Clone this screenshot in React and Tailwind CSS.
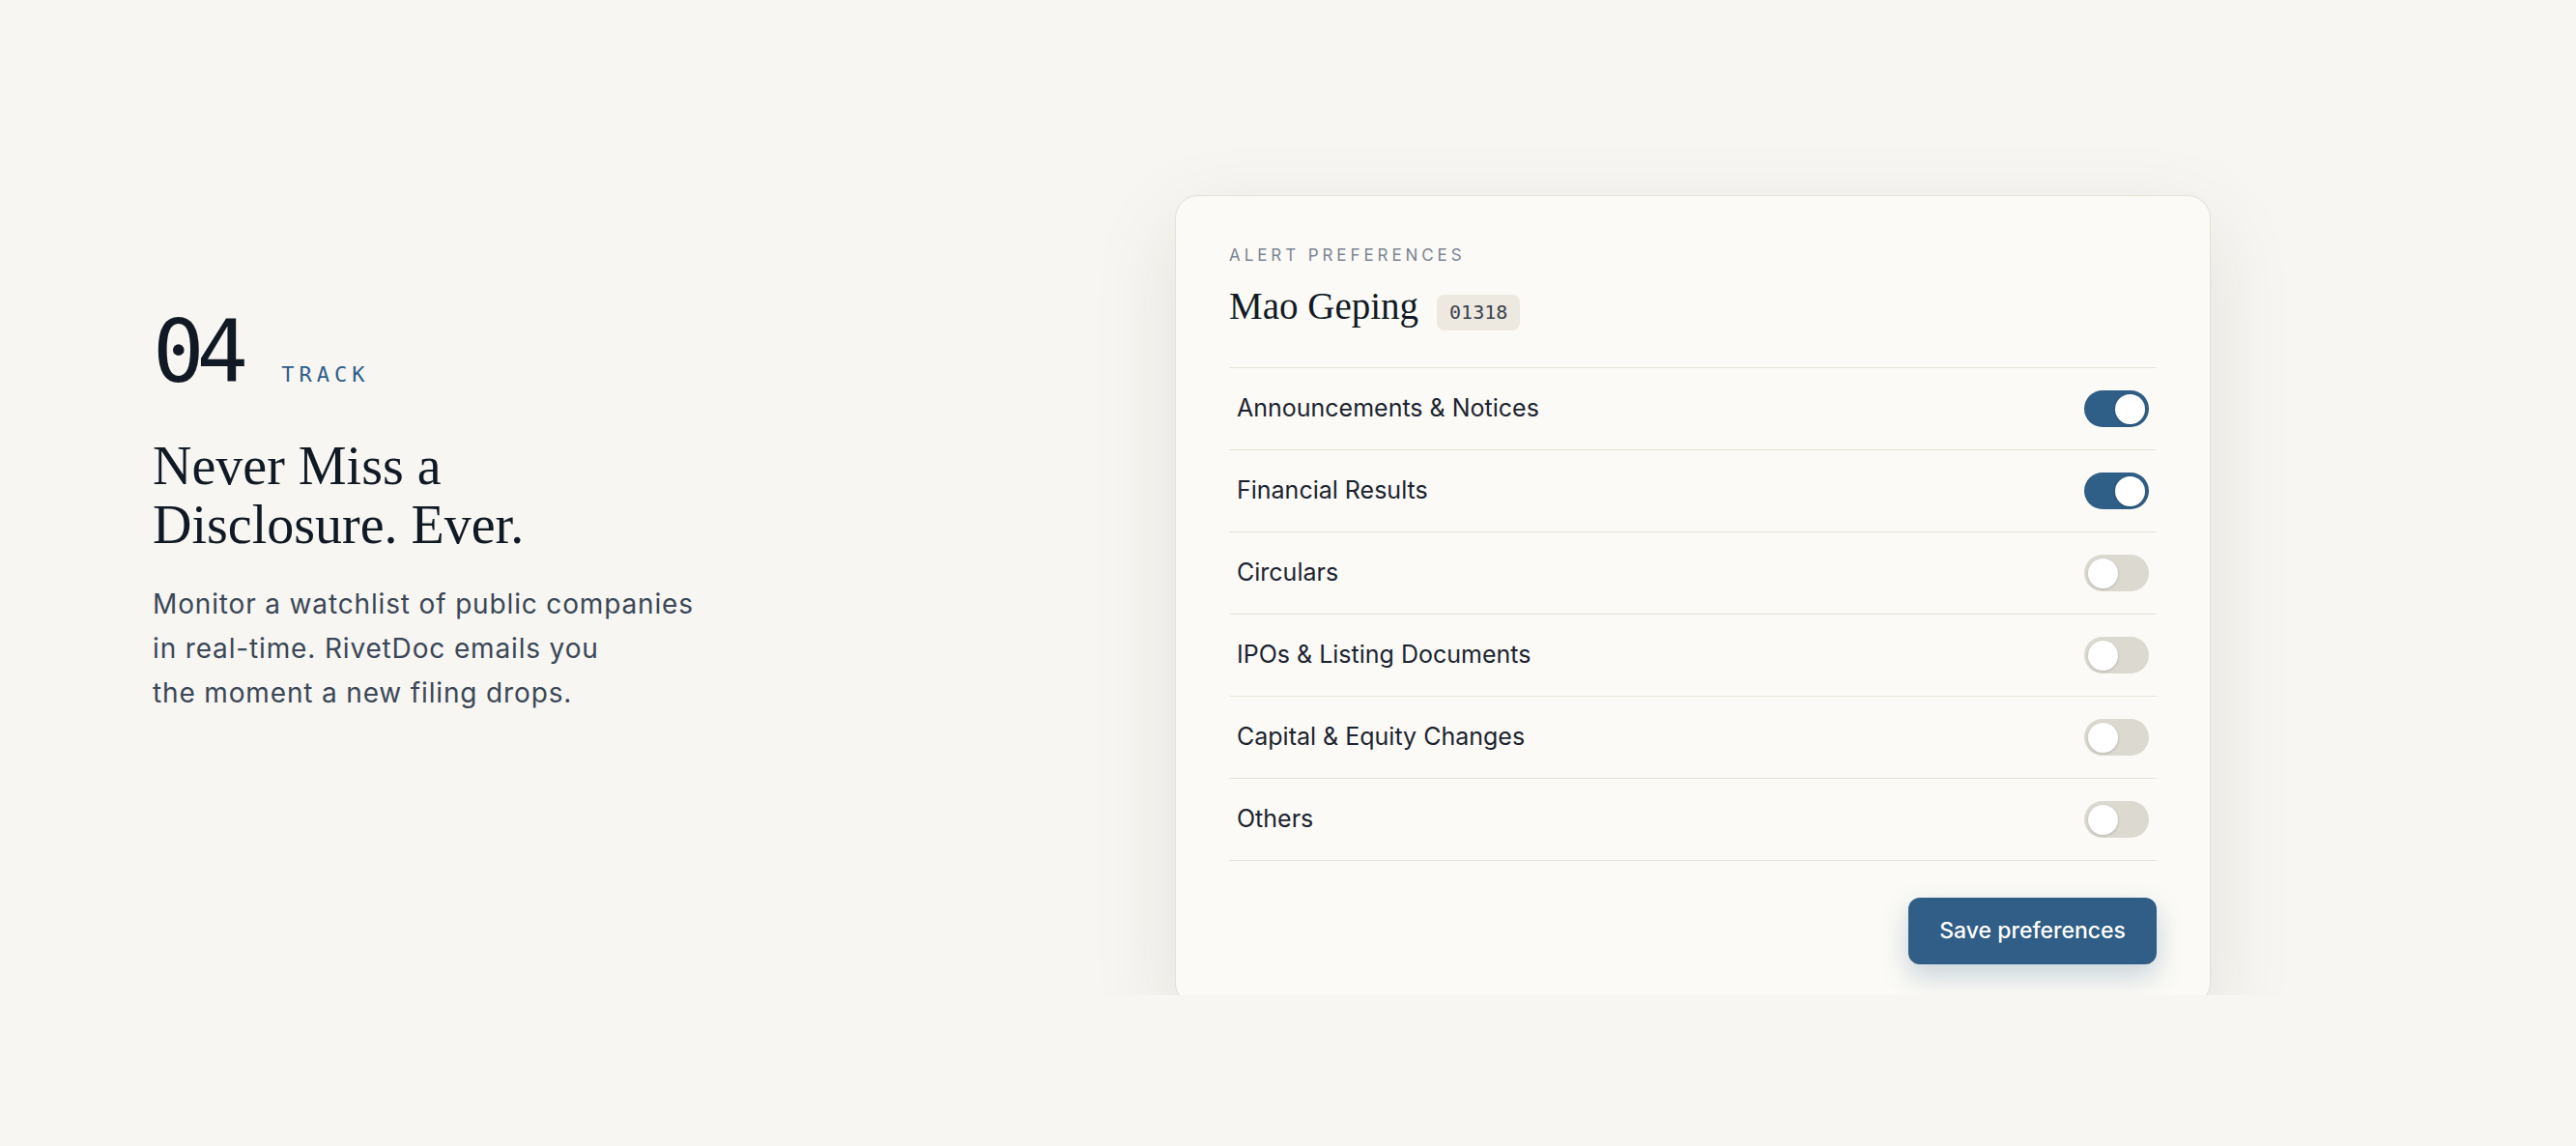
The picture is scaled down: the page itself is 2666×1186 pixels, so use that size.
import React, { useState } from 'react';

const sans = { fontFamily: '"Inter", "Noto Sans", sans-serif' };
const serif = { fontFamily: '"Liberation Serif", "DejaVu Serif", serif' };
const mono = { fontFamily: '"DejaVu Sans Mono", "Liberation Mono", monospace' };

const CATEGORIES = [
    { id: 'announcements', label: 'Announcements & Notices', on: true },
    { id: 'results', label: 'Financial Results', on: true },
    { id: 'circulars', label: 'Circulars', on: false },
    { id: 'ipos', label: 'IPOs & Listing Documents', on: false },
    { id: 'capital', label: 'Capital & Equity Changes', on: false },
    { id: 'others', label: 'Others', on: false },
];

const Toggle = ({ checked, onChange }) => (
    <button type="button"
            role="switch"
            aria-checked={checked}
            onClick={onChange}
            className={`flex items-center w-[67px] h-[38px] rounded-full px-[4px] transition-colors ${checked ? 'bg-[#2f5e86] justify-end' : 'bg-[#dcd9d1] justify-start'}`}>
        <span className="block w-[31px] h-[31px] rounded-full bg-white shadow-[0_1px_3px_rgba(0,0,0,0.18)]" />
    </button>
);

const AlertCard = () => {
    const [prefs, setPrefs] = useState(() => Object.fromEntries(CATEGORIES.map(c => [c.id, c.on])));
    const flip = (id) => setPrefs(p => ({ ...p, [id]: !p[id] }));

    return (
        <div className="w-[1072px] bg-[#fbfaf6] border border-[#e5e0d6] rounded-[24px] px-[55px] pt-[49px] pb-[42px] shadow-[0_28px_90px_rgba(45,40,30,0.10)]">
            <div className="text-[17px] leading-[24px] tracking-[0.23em] uppercase text-[#7d8592]" style={sans}>Alert preferences</div>
            <div className="flex items-baseline gap-[19px] mt-[17px]">
                <h3 className="text-[39px] leading-[48px] text-[#111a24]" style={serif}>Mao Geping</h3>
                <span className="px-[13px] py-[6px] text-[20px] leading-[25px] rounded-[8px] bg-[#ede9e1] text-[#3a424d]" style={mono}>01318</span>
            </div>

            <ul className="mt-[38px] border-t border-[#e9e4db]">
                {CATEGORIES.map(c => (
                    <li key={c.id} className="flex items-center justify-between h-[85px] px-2 border-b border-[#e9e4db]">
                        <span className="text-[25px] text-[#1c2430]" style={sans}>{c.label}</span>
                        <Toggle checked={prefs[c.id]} onChange={() => flip(c.id)} />
                    </li>
                ))}
            </ul>

            <div className="flex justify-end mt-[38px]">
                <button type="button"
                        className="h-[69px] px-[32px] rounded-[12px] bg-[#305e86] text-white text-[23px] font-medium shadow-[0_12px_28px_rgba(48,94,134,0.25)]"
                        style={sans}>
                    Save preferences
                </button>
            </div>
        </div>
    );
};

export default function App() {
    return (
        <div className="min-h-screen w-full bg-[#f7f6f2]">
            <section className="flex h-[1030px] overflow-hidden pl-[158px]">
                <div className="w-[1058px] shrink-0 pt-[320px]">
                    <div className="flex items-baseline">
                        <span className="text-[89px] leading-none tracking-[-8px] text-[#111a24]" style={mono}>04</span>
                        <span className="ml-[42px] text-[22px] tracking-[5px] text-[#2e5f8c]" style={mono}>TRACK</span>
                    </div>
                    <h2 className="mt-[43px] text-[56px] leading-[61px] text-[#111a24]" style={serif}>
                        Never Miss a<br />Disclosure. Ever.
                    </h2>
                    <p className="mt-[28px] text-[28px] leading-[46px] tracking-[0.85px] text-[#3b4756]" style={sans}>
                        Monitor a watchlist of public companies<br />
                        in real-time. RivetDoc emails you<br />
                        the moment a new filing drops.
                    </p>
                </div>
                <div className="shrink-0 pt-[202px]">
                    <AlertCard />
                </div>
            </section>
        </div>
    );
}
